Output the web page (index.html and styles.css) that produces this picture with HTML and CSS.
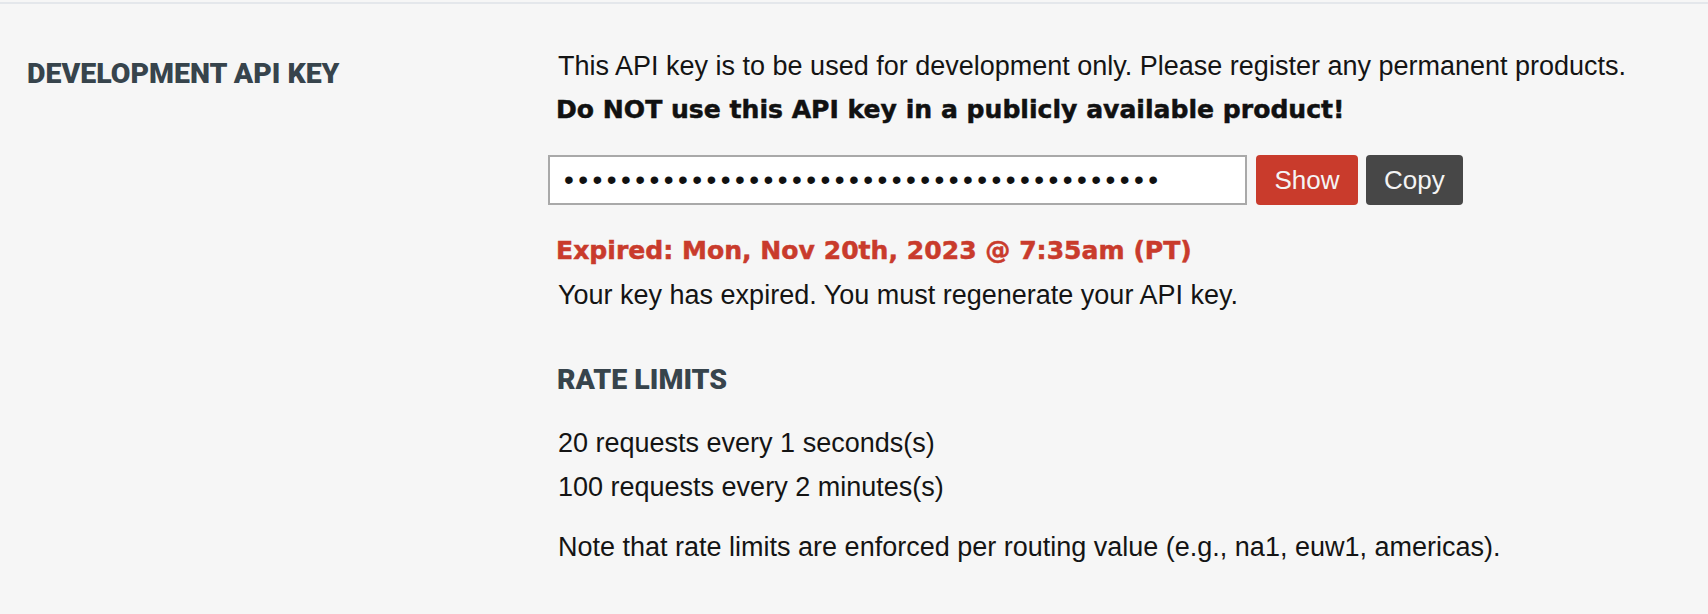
FILE: index.html
```html
<!DOCTYPE html>
<html lang="en">
<head>
<meta charset="utf-8">
<title>Development API Key</title>
<link rel="stylesheet" href="styles.css">
</head>
<body>
<section class="key-section">
  <div class="key-label">
    <h2 class="section-title">DEVELOPMENT API KEY</h2>
  </div>
  <div class="key-body">
    <p class="text intro">This API key is to be used for development only. Please register any permanent products.</p>
    <p class="heavy warn">Do NOT use this API key in a publicly available product!</p>
    <div class="key-row">
      <input class="key-input" type="password" value="RGAPI-0a1b2c3d-4e5f-6a7b-8c9d-0e1f2a3b4c5d" readonly>
      <button class="btn btn-show" type="button">Show</button>
      <button class="btn btn-copy" type="button">Copy</button>
    </div>
    <p class="heavy expired">Expired: Mon, Nov 20th, 2023 @ 7:35am (PT)</p>
    <p class="text">Your key has expired. You must regenerate your API key.</p>
    <h3 class="sub-title">RATE LIMITS</h3>
    <p class="text limit-first">20 requests every 1 seconds(s)</p>
    <p class="text">100 requests every 2 minutes(s)</p>
    <p class="text note">Note that rate limits are enforced per routing value (e.g., na1, euw1, americas).</p>
  </div>
</section>
</body>
</html>
```
FILE: styles.css
```css
html {
  background: #f6f6f6;
}
body {
  margin: 0;
  background: #f6f6f6;
  color: #141414;
  font-family: "Liberation Sans", Arial, sans-serif;
}
.key-section {
  margin-top: 2px;
  border-top: 2px solid #e4e7eb;
  padding-top: 41px;
  display: grid;
  grid-template-columns: 548px 1fr;
}
.key-label {
  padding-left: 27px;
}
.section-title,
.sub-title {
  margin: 0;
  font-family: Roboto, "Open Sans", sans-serif;
  font-weight: 900;
  font-size: 28.5px;
  line-height: 44px;
  color: #37444c;
}
.section-title {
  margin-top: 7.3px;
}
.key-body {
  display: flex;
  flex-direction: column;
  align-items: flex-start;
}
.text {
  margin: 0;
  padding-left: 10px;
  font-size: 27px;
  line-height: 44px;
}
.intro {
  line-height: 43px;
}
.heavy {
  margin: 0;
  padding-left: 8px;
  font-family: "DejaVu Sans", sans-serif;
  font-weight: 700;
  font-size: 25.1px;
  line-height: 44px;
  -webkit-text-stroke: 0.5px currentColor;
}
.warn {
  color: #111111;
}
.key-row {
  margin-top: 23px;
  display: flex;
  gap: 8px;
  height: 50px;
}
.key-input {
  box-sizing: border-box;
  width: 699px;
  height: 50px;
  margin: 0 1px 0 0;
  padding: 0 0 0 14px;
  border: 2px solid #a9a9a9;
  border-radius: 0;
  background: #ffffff;
  color: #111111;
  font-family: "Liberation Sans", Arial, sans-serif;
  font-size: 28px;
  letter-spacing: 4.45px;
  outline: none;
}
.btn {
  box-sizing: border-box;
  height: 50px;
  margin: 0;
  padding: 0 18px;
  border: 0;
  border-radius: 4px;
  color: #f4f4f4;
  font-family: "Liberation Sans", Arial, sans-serif;
  font-size: 26px;
  line-height: 50px;
  cursor: pointer;
}
.btn-show {
  padding: 0 18.5px;
  background: #c93b2c;
}
.btn-copy {
  background: #474747;
}
.expired {
  margin-top: 23.6px;
  color: #c93b2c;
}
.sub-title {
  margin-top: 41.7px;
  padding-left: 9px;
}
.limit-first {
  margin-top: 18.6px;
}
.note {
  margin-top: 16.3px;
}
```
